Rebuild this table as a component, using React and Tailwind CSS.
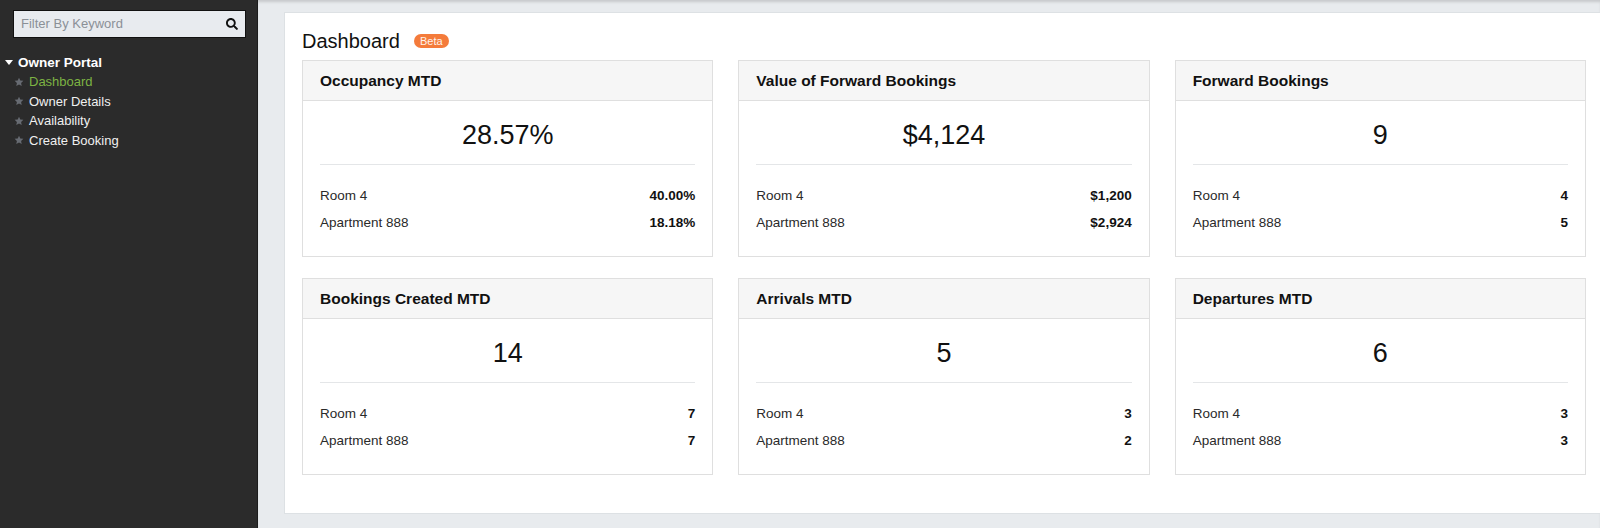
import React from "react";
import { FaSearch } from "react-icons/fa";

const cards = [
  { title: "Occupancy MTD", value: "28.57%", rows: [["Room 4", "40.00%"], ["Apartment 888", "18.18%"]] },
  { title: "Value of Forward Bookings", value: "$4,124", rows: [["Room 4", "$1,200"], ["Apartment 888", "$2,924"]] },
  { title: "Forward Bookings", value: "9", rows: [["Room 4", "4"], ["Apartment 888", "5"]] },
  { title: "Bookings Created MTD", value: "14", rows: [["Room 4", "7"], ["Apartment 888", "7"]] },
  { title: "Arrivals MTD", value: "5", rows: [["Room 4", "3"], ["Apartment 888", "2"]] },
  { title: "Departures MTD", value: "6", rows: [["Room 4", "3"], ["Apartment 888", "3"]] },
];

function Star() {
  return (
    <svg width="10" height="10" viewBox="0 0 24 24" className="shrink-0">
      <polygon
        points="12,1.5 15.1,8.3 22.5,9.1 17,14.1 18.5,21.5 12,17.8 5.5,21.5 7,14.1 1.5,9.1 8.9,8.3"
        fill="#676b72"
      />
    </svg>
  );
}

function Card({ title, value, rows }) {
  return (
    <div className="border border-[#dfdfdf] bg-white">
      <div className="h-[40px] border-b border-[#dfdfdf] bg-[#f6f6f6] pl-[17px] flex items-center">
        <span className="text-[15.5px] font-bold text-[#111]">{title}</span>
      </div>
      <div className="px-[17px] pt-[18px] pb-[20px]">
        <div className="text-center text-[27px] leading-[32px] text-[#111]">{value}</div>
        <div className="mt-[13px] h-px bg-[#e4e6e8]" />
        <div className="mt-[17px]">
          {rows.map(([label, val]) => (
            <div key={label} className="flex justify-between text-[13.5px] leading-[27px]">
              <span className="text-[#2a2a2a]">{label}</span>
              <span className="font-bold text-[#111]">{val}</span>
            </div>
          ))}
        </div>
      </div>
    </div>
  );
}

export default function App() {
  const items = ["Dashboard", "Owner Details", "Availability", "Create Booking"];
  return (
    <div className="flex h-[528px] w-[1600px] overflow-hidden font-['Liberation_Sans',Arial,sans-serif]">
      <aside className="w-[258px] shrink-0 bg-[#2b2b2b] border-r border-[#1c1c1c]">
        <div className="pt-[10px] pl-[13px]">
          <div className="flex h-[28px] w-[233px] items-center justify-between border border-[#111] bg-[#e8ebef] pl-[7px] pr-[7px]">
            <span className="text-[13px] text-[#8b9097]">Filter By Keyword</span>
            <FaSearch className="text-[12px] text-[#111]" />
          </div>
        </div>
        <div className="mt-[15px] pl-[5px]">
          <div className="flex items-center gap-[5px] leading-[19px]">
            <svg width="8" height="5" viewBox="0 0 8 5">
              <polygon points="0,0 8,0 4,5" fill="#fff" />
            </svg>
            <span className="text-[13.5px] font-bold text-white">Owner Portal</span>
          </div>
          <ul className="pl-[9px]">
            {items.map((it, i) => (
              <li key={it} className="flex items-center gap-[5px] leading-[19.5px]">
                <Star />
                <span className={`text-[13px] ${i === 0 ? "text-[#7db343]" : "text-[#f0f0f0]"}`}>{it}</span>
              </li>
            ))}
          </ul>
        </div>
      </aside>
      <main className="flex-1 overflow-hidden bg-[#e8ebee] pt-[12px] pl-[26px] shadow-[inset_0_3px_3px_-1px_rgba(0,0,0,0.15)]">
        <div className="w-[1320px] border border-[#dde1e4] bg-white px-[17px] pt-[16px] pb-[38px]">
          <div className="mb-[7px] flex items-center gap-[14px] leading-[24px]">
            <h1 className="text-[20px] text-[#111]">Dashboard</h1>
            <span className="flex h-[14px] w-[35px] items-center justify-center rounded-full bg-[#f47b3b] text-[11px] leading-none text-[#fff3ea]">
              Beta
            </span>
          </div>
          <div className="grid grid-cols-3 gap-x-[25px] gap-y-[21px]">
            {cards.map((c) => (
              <Card key={c.title} {...c} />
            ))}
          </div>
        </div>
      </main>
    </div>
  );
}
